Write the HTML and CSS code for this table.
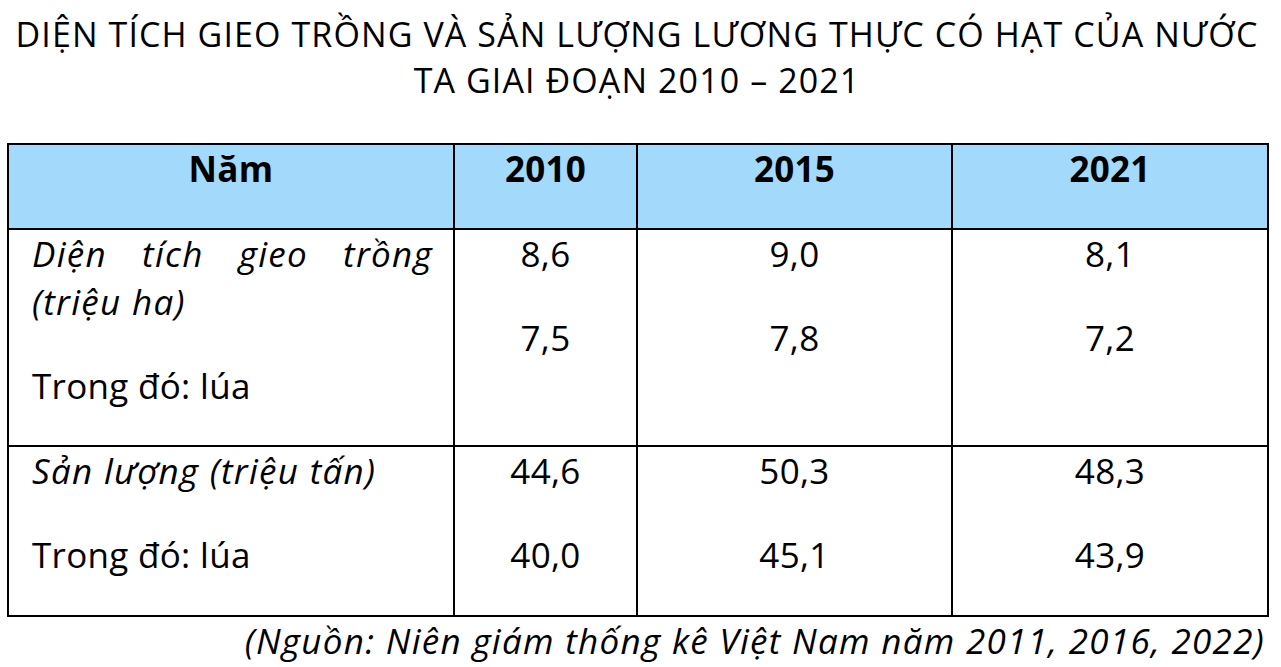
FILE: index.html
```html
<!DOCTYPE html>
<html lang="vi">
<head>
<meta charset="utf-8">
<title>Diện tích gieo trồng và sản lượng lương thực</title>
<link rel="stylesheet" href="styles.css">
</head>
<body>
<main class="page">
  <h1 class="title">DIỆN TÍCH GIEO TRỒNG VÀ SẢN LƯỢNG LƯƠNG THỰC CÓ HẠT CỦA NƯỚC<br>TA GIAI ĐOẠN 2010 – 2021</h1>
  <table class="data">
    <colgroup>
      <col class="c1"><col class="c2"><col class="c3"><col class="c4">
    </colgroup>
    <thead>
      <tr>
        <th><p>Năm</p></th>
        <th><p>2010</p></th>
        <th><p>2015</p></th>
        <th><p>2021</p></th>
      </tr>
    </thead>
    <tbody>
      <tr>
        <td class="label"><p class="it just">Diện tích gieo trồng (triệu ha)</p><p>Trong đó: lúa</p></td>
        <td><p>8,6</p><p>7,5</p></td>
        <td><p>9,0</p><p>7,8</p></td>
        <td><p>8,1</p><p>7,2</p></td>
      </tr>
      <tr>
        <td class="label"><p class="it">Sản lượng (triệu tấn)</p><p>Trong đó: lúa</p></td>
        <td><p>44,6</p><p>40,0</p></td>
        <td><p>50,3</p><p>45,1</p></td>
        <td><p>48,3</p><p>43,9</p></td>
      </tr>
    </tbody>
  </table>
  <p class="source">(Nguồn: Niên giám thống kê Việt Nam năm 2011, 2016, 2022)</p>
</main>
</body>
</html>
```
FILE: styles.css
```css
html, body {
  margin: 0;
  padding: 0;
  background: #ffffff;
}
body {
  font-family: "Open Sans", "Noto Sans", sans-serif;
  color: #000000;
}
.page {
  width: 1260px;
  margin-left: 7px;
  padding-top: 11px;
}
.title {
  margin: 0 0 39px;
  font-size: 34px;
  font-weight: 400;
  line-height: 1.362;
  letter-spacing: 1.1px;
  text-align: center;
}
.data {
  width: 1260px;
  border-collapse: collapse;
  table-layout: fixed;
  font-size: 35px;
  line-height: 1.362;
  letter-spacing: 0.3px;
}
.c1 { width: 446px; }
.c2 { width: 183px; }
.c3 { width: 315px; }
.c4 { width: 316px; }
.data th, .data td {
  border: 2px solid #000000;
  padding: 0;
  vertical-align: top;
  text-align: center;
}
.data th {
  background: #a3d9fb;
  font-weight: 700;
}
.data p {
  margin: 0 0 36px;
}
.data td.label {
  text-align: left;
  padding: 0 20px 0 23px;
}
.it {
  font-style: italic;
  letter-spacing: 1.3px;
}
.just { text-align: justify; }
.source {
  margin: 0;
  font-size: 35px;
  line-height: 1.362;
  font-style: italic;
  letter-spacing: 1.3px;
  text-align: right;
  padding-right: 2px;
}
```
